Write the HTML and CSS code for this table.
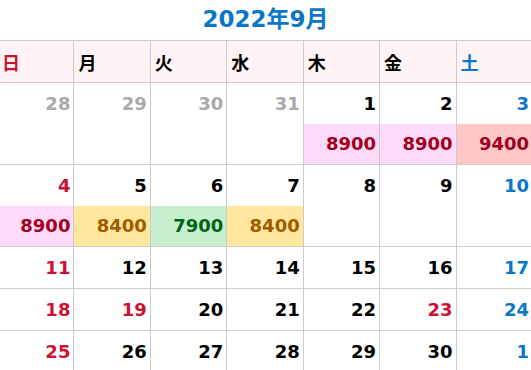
FILE: index.html
```html
<!DOCTYPE html>
<html lang="ja">
<head>
<meta charset="utf-8">
<title>2022年9月</title>
<link rel="stylesheet" href="styles.css">
</head>
<body>
<div class="cal">
  <h1 class="title">2022年9月</h1>
  <table class="grid">
    <thead>
      <tr>
        <th class="sun">日</th><th>月</th><th>火</th><th>水</th><th>木</th><th>金</th><th class="sat">土</th>
      </tr>
    </thead>
    <tbody>
      <tr>
        <td><div class="day muted">28</div><div class="price"></div></td>
        <td><div class="day muted">29</div><div class="price"></div></td>
        <td><div class="day muted">30</div><div class="price"></div></td>
        <td><div class="day muted">31</div><div class="price"></div></td>
        <td><div class="day">1</div><div class="price p-pink">8900</div></td>
        <td><div class="day">2</div><div class="price p-pink">8900</div></td>
        <td><div class="day sat">3</div><div class="price p-salmon">9400</div></td>
      </tr>
      <tr>
        <td><div class="day sun">4</div><div class="price p-pink">8900</div></td>
        <td><div class="day">5</div><div class="price p-yellow">8400</div></td>
        <td><div class="day">6</div><div class="price p-green">7900</div></td>
        <td><div class="day">7</div><div class="price p-yellow">8400</div></td>
        <td><div class="day">8</div><div class="price"></div></td>
        <td><div class="day">9</div><div class="price"></div></td>
        <td><div class="day sat">10</div><div class="price"></div></td>
      </tr>
      <tr>
        <td><div class="day sun">11</div></td>
        <td><div class="day">12</div></td>
        <td><div class="day">13</div></td>
        <td><div class="day">14</div></td>
        <td><div class="day">15</div></td>
        <td><div class="day">16</div></td>
        <td><div class="day sat">17</div></td>
      </tr>
      <tr>
        <td><div class="day sun">18</div></td>
        <td><div class="day sun">19</div></td>
        <td><div class="day">20</div></td>
        <td><div class="day">21</div></td>
        <td><div class="day">22</div></td>
        <td><div class="day sun">23</div></td>
        <td><div class="day sat">24</div></td>
      </tr>
      <tr>
        <td><div class="day sun">25</div></td>
        <td><div class="day">26</div></td>
        <td><div class="day">27</div></td>
        <td><div class="day">28</div></td>
        <td><div class="day">29</div></td>
        <td><div class="day">30</div></td>
        <td><div class="day sat">1</div></td>
      </tr>
    </tbody>
  </table>
</div>
</body>
</html>
```

FILE: styles.css
```css
html, body {
  margin: 0;
  padding: 0;
  background: #fff;
  overflow: hidden;
}

body {
  font-family: "DejaVu Sans", "Noto Sans CJK JP", sans-serif;
  color: #000;
}

.cal {
  width: 531px;
}

.title {
  margin: 0;
  height: 40px;
  line-height: 39px;
  text-align: center;
  font-size: 23px;
  font-weight: bold;
  color: #0a77c9;
}

.grid {
  width: 536px;
  margin-left: -3px;
  border-collapse: collapse;
  table-layout: fixed;
}

.grid th,
.grid td {
  border: 1px solid #cccccc;
  padding: 0;
}

.grid th {
  height: 41px;
  background: #fff3f6;
  text-align: left;
  padding-left: 4px;
  font-family: "Noto Sans CJK JP", sans-serif;
  font-size: 18px;
  font-weight: bold;
  color: #000;
}

.grid th.sun { color: #cc1133; }
.grid th.sat { color: #0a77c9; }

.day {
  height: 41px;
  line-height: 41px;
  text-align: right;
  padding-right: 3px;
  font-size: 18px;
  font-weight: bold;
  color: #000;
}

.day.muted { color: #aaaaaa; }
.day.sun { color: #cc1133; }
.day.sat { color: #0a77c9; }

.price {
  height: 40px;
  line-height: 40px;
  text-align: right;
  padding-right: 3px;
  font-size: 18px;
  font-weight: bold;
}

.p-pink { background: #ffd9f8; color: #a0001e; }
.p-salmon { background: #ffc7c8; color: #a0001e; }
.p-yellow { background: #ffe89d; color: #a05a00; }
.p-green { background: #c6efcf; color: #006414; }
```
